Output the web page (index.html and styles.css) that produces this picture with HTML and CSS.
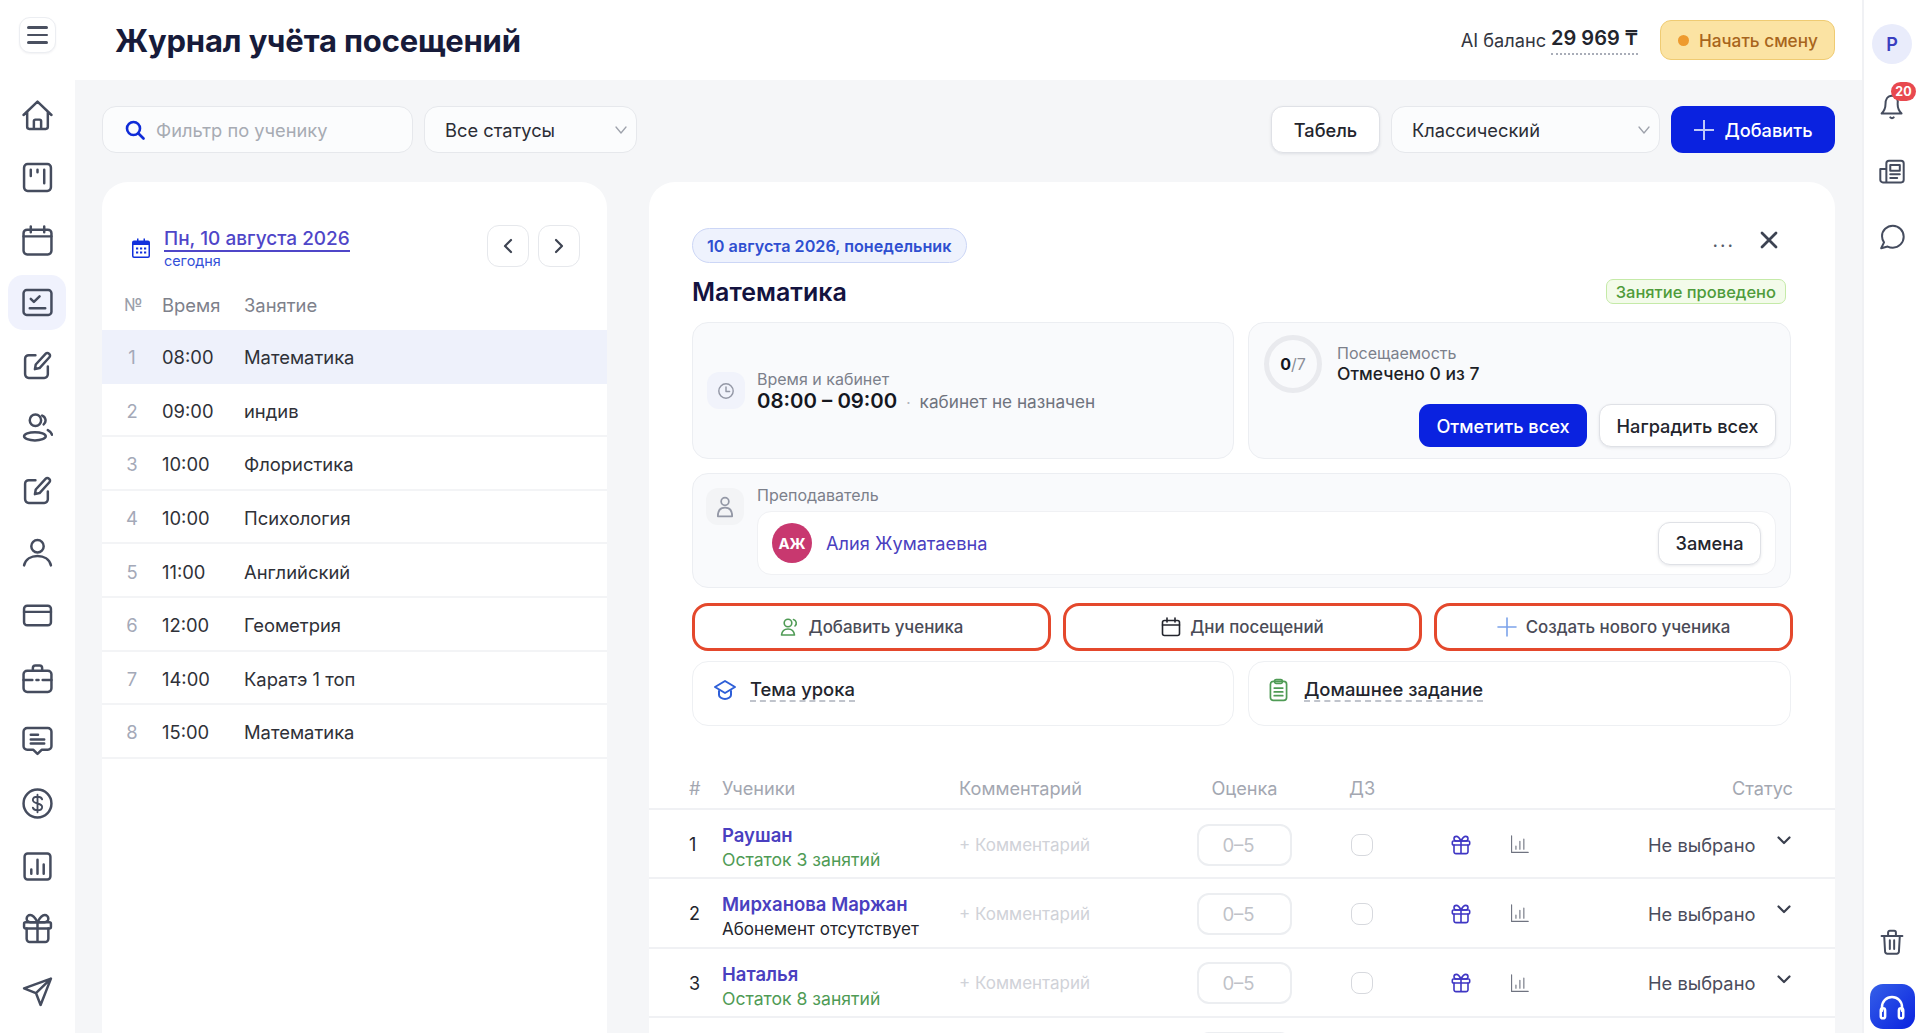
FILE: index.html
```html
<!DOCTYPE html>
<html lang="ru">
<head>
<meta charset="utf-8">
<title>Журнал учёта посещений</title>
<link rel="stylesheet" href="styles.css">
</head>
<body>
<svg class="defs" width="0" height="0" aria-hidden="true">
  <symbol id="i-home" viewBox="0 0 30 30"><path d="M1.500 14.500 15 1.500l13.500 13M5 11.500V26a2 2 0 0 0 2 2h16a2 2 0 0 0 2-2V11.500M11.500 28v-7.500a1.500 1.500 0 0 1 1.500-1.500h4a1.500 1.500 0 0 1 1.500 1.500V28"/></symbol>
  <symbol id="i-board" viewBox="0 0 30 30"><rect x="2" y="2" width="26" height="26" rx="3.500"/><path d="M8.500 7.500v6M15 7.500v2.500M21.500 7.500v13"/></symbol>
  <symbol id="i-calendar" viewBox="0 0 30 30"><rect x="1.500" y="4.500" width="27" height="24" rx="3.500"/><path d="M1.500 11h27M8.500 1.500V7M21.500 1.500V7"/></symbol>
  <symbol id="i-check" viewBox="0 0 30 30"><rect x="1.500" y="3" width="27" height="24" rx="3"/><path d="m8.500 11.500 3 3 5.500-5.500M7.500 20.500h15"/></symbol>
  <symbol id="i-edit" viewBox="0 0 30 30"><path d="M13 5H6.500a3.500 3.500 0 0 0-3.500 3.500v15A3.500 3.500 0 0 0 6.500 27h15a3.500 3.500 0 0 0 3.500-3.500V16"/><path d="M12.500 18.500l.8-4.500L23 3.500a2.100 2.100 0 0 1 3 0l.5.5a2.100 2.100 0 0 1 0 3L17 17.500z"/></symbol>
  <symbol id="i-users" viewBox="0 0 30 30"><circle cx="13" cy="8" r="5.500"/><ellipse cx="12.500" cy="23.500" rx="10.500" ry="4"/><path d="M19.500 3.500a5 5 0 0 1 1.500 8.500M25 17.500c2 1 3.500 2.500 4 4.500"/></symbol>
  <symbol id="i-user" viewBox="0 0 30 30"><circle cx="15" cy="8" r="6"/><path d="M2 26.500c1.500-6 7-9 13-9s11.500 3 13 9"/></symbol>
  <symbol id="i-card" viewBox="0 0 30 30"><rect x="2" y="5.500" width="26" height="19" rx="3"/><path d="M2 11.500h26"/></symbol>
  <symbol id="i-case" viewBox="0 0 30 30"><rect x="1.500" y="7.500" width="27" height="20.500" rx="3.500"/><path d="M10.500 7.500V5a2.500 2.500 0 0 1 2.500-2.500h4A2.500 2.500 0 0 1 19.500 5v2.500M1.500 16.500H10M14 16.500h2M20 16.500h8.500"/></symbol>
  <symbol id="i-msg" viewBox="0 0 30 30"><path d="M5 3h20a3.500 3.500 0 0 1 3.500 3.500v14A3.500 3.500 0 0 1 25 24h-6l-4 4-4-4H5a3.500 3.500 0 0 1-3.500-3.500v-14A3.500 3.500 0 0 1 5 3z"/><path d="M8.500 9.500h7M8.500 14h13M8.500 18h13"/></symbol>
  <symbol id="i-dollar" viewBox="0 0 30 30"><circle cx="15" cy="15" r="13.500"/><path d="M19.500 11c-.5-1.500-2.300-2.500-4.500-2.500-2.500 0-4.500 1.300-4.500 3.200 0 4.300 9 2.300 9 6.600 0 1.900-2 3.200-4.500 3.200-2.200 0-4-1-4.500-2.500M15 6.500v17" stroke-width="1.800"/></symbol>
  <symbol id="i-chart" viewBox="0 0 30 30"><rect x="2.500" y="2.500" width="25" height="25" rx="3"/><path d="M9 22v-4M15 22V8.500M21 22v-9"/></symbol>
  <symbol id="i-gift" viewBox="0 0 30 30"><rect x="2" y="9" width="26" height="6" rx="1.500"/><path d="M4.500 15v10a3 3 0 0 0 3 3h15a3 3 0 0 0 3-3V15M15 9v19M15 9c-2-4-4.500-7-7-7a3.500 3.500 0 0 0 0 7zM15 9c2-4 4.500-7 7-7a3.500 3.500 0 0 1 0 7z"/></symbol>
  <symbol id="i-send" viewBox="0 0 30 30"><path d="M28 2.500 2 12l11.500 4.500L18 28zM28 2.500 13.500 16.500"/></symbol>
  <symbol id="i-bell" viewBox="0 0 30 30"><path d="M15 2C9.500 2 7.500 7 7.500 11.500c0 5-1.500 8-4.500 11h23c-3-3-4.500-6-4.500-11C22.500 7 20.500 2 15 2zM13 27c1 1.200 3 1.200 4 0"/></symbol>
  <symbol id="i-news" viewBox="0 0 30 30"><path d="M8.500 27V5a3 3 0 0 1 3-3h14a3 3 0 0 1 3 3v19a3 3 0 0 1-3 3H4.500a3 3 0 0 1-3-3V11.500H8.500"/><rect x="13" y="7" width="11" height="6.500"/><path d="M13 17.500h11M13 22h8"/></symbol>
  <symbol id="i-chat" viewBox="0 0 30 30"><path d="M16 2C9 2 3.500 7.500 3.500 14c0 2.800 1 5.300 2.300 7.200L2.500 28l7.500-2c1.800.9 3.800 1.300 6 1.300 7 0 12.500-5.800 12.500-12.600S23 2 16 2z"/></symbol>
  <symbol id="i-trash" viewBox="0 0 30 30"><path d="M3 8h24M6 8l1 18a2.500 2.500 0 0 0 2.500 2.500h11A2.500 2.500 0 0 0 23 26L24 8M10.500 8V4A2 2 0 0 1 12.500 2h5a2 2 0 0 1 2 2V8M12.500 13v10M17.500 13v10"/></symbol>
  <symbol id="i-bar" viewBox="0 0 24 24"><path d="M2 1v21h21"/><path d="M7.500 18v-4M12.500 18V8M17.500 18V5"/></symbol>
</svg>

<aside class="sidebar">
  <div class="sidebar-top">
    <button class="burger" type="button"><span></span><span></span><span></span></button>
  </div>
  <nav class="nav">
    <a class="nav-item"><svg class="ico-nav"><use href="#i-home"/></svg></a>
    <a class="nav-item"><svg class="ico-nav"><use href="#i-board"/></svg></a>
    <a class="nav-item"><svg class="ico-nav"><use href="#i-calendar"/></svg></a>
    <a class="nav-item nav-active"><svg class="ico-nav"><use href="#i-check"/></svg></a>
    <a class="nav-item"><svg class="ico-nav"><use href="#i-edit"/></svg></a>
    <a class="nav-item"><svg class="ico-nav"><use href="#i-users"/></svg></a>
    <a class="nav-item"><svg class="ico-nav"><use href="#i-edit"/></svg></a>
    <a class="nav-item"><svg class="ico-nav"><use href="#i-user"/></svg></a>
    <a class="nav-item"><svg class="ico-nav"><use href="#i-card"/></svg></a>
    <a class="nav-item"><svg class="ico-nav"><use href="#i-case"/></svg></a>
    <a class="nav-item"><svg class="ico-nav"><use href="#i-msg"/></svg></a>
    <a class="nav-item"><svg class="ico-nav"><use href="#i-dollar"/></svg></a>
    <a class="nav-item"><svg class="ico-nav"><use href="#i-chart"/></svg></a>
    <a class="nav-item"><svg class="ico-nav"><use href="#i-gift"/></svg></a>
    <a class="nav-item"><svg class="ico-nav"><use href="#i-send"/></svg></a>
  </nav>
</aside>

<div class="main">
  <header class="topbar">
    <h1 class="page-title">Журнал учёта посещений</h1>
    <div class="balance"><span class="balance-label">AI баланс</span><span class="balance-value">29 969 ₸</span></div>
    <button class="shift-btn" type="button"><span class="shift-dot"></span>Начать смену</button>
  </header>

  <div class="content">
    <div class="toolbar">
      <label class="search">
        <svg class="ico-search" viewBox="0 0 20 20"><circle cx="8.500" cy="8.500" r="6.500"/><path d="m13.500 13.500 5 5"/></svg>
        <span class="placeholder">Фильтр по ученику</span>
      </label>
      <div class="select select-status"><span>Все статусы</span><svg class="ico-caret" viewBox="0 0 12 8"><path d="m1 1 5 6 5-6"/></svg></div>
      <div class="toolbar-gap"></div>
      <button class="btn btn-tabel" type="button">Табель</button>
      <div class="select select-view"><span>Классический</span><svg class="ico-caret" viewBox="0 0 12 8"><path d="m1 1 5 6 5-6"/></svg></div>
      <button class="btn-add" type="button"><svg class="ico-plus" viewBox="0 0 20 20"><path d="M10 0v20M0 10h20"/></svg>Добавить</button>
    </div>

    <div class="columns">
      <section class="panel lessons">
        <div class="lessons-head">
          <svg class="ico-date" viewBox="0 0 18 20"><path d="M2 2.500h3V.5h1.500v2h5v-2H13v2h3a2 2 0 0 1 2 2V18a2 2 0 0 1-2 2H2a2 2 0 0 1-2-2V4.500a2 2 0 0 1 2-2zM1.500 7v11c0 .3.2.5.5.5h14c.3 0 .5-.2.5-.5V7z"/><path d="M4 9.500h2.200v2H4zM8 9.500h2.200v2H8zM12 9.500h2.200v2H12zM4 13.500h2.200v2H4zM8 13.500h2.200v2H8zM12 13.500h2.200v2H12z"/></svg>
          <div class="date-block">
            <a class="date-link">Пн, 10 августа 2026</a>
            <div class="date-sub">сегодня</div>
          </div>
          <button class="arrow-btn" type="button"><svg class="ico-arrow" viewBox="0 0 10 16"><path d="M8 2 2 8l6 6"/></svg></button>
          <button class="arrow-btn" type="button"><svg class="ico-arrow" viewBox="0 0 10 16"><path d="m2 2 6 6-6 6"/></svg></button>
        </div>
        <div class="lesson-row lesson-header"><span class="l-num">№</span><span>Время</span><span>Занятие</span></div>
        <div class="lesson-row lesson-item lesson-active"><span class="l-num">1</span><span>08:00</span><span>Математика</span></div>
        <div class="lesson-row lesson-item"><span class="l-num">2</span><span>09:00</span><span>индив</span></div>
        <div class="lesson-row lesson-item"><span class="l-num">3</span><span>10:00</span><span>Флористика</span></div>
        <div class="lesson-row lesson-item"><span class="l-num">4</span><span>10:00</span><span>Психология</span></div>
        <div class="lesson-row lesson-item"><span class="l-num">5</span><span>11:00</span><span>Английский</span></div>
        <div class="lesson-row lesson-item"><span class="l-num">6</span><span>12:00</span><span>Геометрия</span></div>
        <div class="lesson-row lesson-item"><span class="l-num">7</span><span>14:00</span><span>Каратэ 1 топ</span></div>
        <div class="lesson-row lesson-item"><span class="l-num">8</span><span>15:00</span><span>Математика</span></div>
      </section>

      <section class="panel detail">
        <div class="detail-body">
          <div class="detail-top">
            <span class="date-pill">10 августа 2026, понедельник</span>
            <div class="detail-actions">
              <span class="dots">...</span>
              <svg class="ico-close" viewBox="0 0 18 18"><path d="m2 2 14 14M16 2 2 16"/></svg>
            </div>
          </div>
          <div class="title-row">
            <h2 class="lesson-title">Математика</h2>
            <span class="done-badge">Занятие проведено</span>
          </div>

          <div class="info-grid">
            <div class="info-card time-card">
              <span class="tile"><svg class="ico-tile" viewBox="0 0 20 20"><circle cx="10" cy="10" r="8"/><path d="M10 5.500V10.500h4"/></svg></span>
              <div class="time-text">
                <div class="info-label">Время и кабинет</div>
                <div class="time-line"><span class="time-value">08:00 – 09:00</span><span class="time-sep">·</span><span class="time-room">кабинет не назначен</span></div>
              </div>
            </div>
            <div class="info-card attend-card">
              <div class="attend-top">
                <div class="ring"><b>0</b><span>/7</span></div>
                <div>
                  <div class="info-label">Посещаемость</div>
                  <div class="attend-value">Отмечено 0 из 7</div>
                </div>
              </div>
              <div class="attend-actions">
                <button class="btn-primary" type="button">Отметить всех</button>
                <button class="btn btn-award" type="button">Наградить всех</button>
              </div>
            </div>
          </div>

          <div class="info-card teacher-card">
            <span class="tile tile-gray"><svg class="ico-tile ico-tile-lg" viewBox="0 0 20 20"><circle cx="10" cy="5" r="3.500"/><path d="M3.500 18.500c0-5 2.500-8 6.500-8s6.500 3 6.500 8z"/></svg></span>
            <div class="teacher-main">
              <div class="info-label">Преподаватель</div>
              <div class="teacher-box">
                <span class="avatar">АЖ</span>
                <a class="teacher-name">Алия Жуматаевна</a>
                <button class="btn btn-swap" type="button">Замена</button>
              </div>
            </div>
          </div>

          <div class="action-grid">
            <button class="action" type="button"><svg class="ico-act ico-green" viewBox="0 0 20 20"><circle cx="8" cy="6" r="3.800"/><path d="M1.500 18c.5-4 3-6 6.500-6s6 2 6.500 6zM13.500 2.500a3.800 3.800 0 0 1 1.500 6.500"/></svg>Добавить ученика</button>
            <button class="action" type="button"><svg class="ico-act ico-dark" viewBox="0 0 20 20"><rect x="1.500" y="3.500" width="17" height="15" rx="2"/><path d="M1.500 8h17M6 1v4M14 1v4"/></svg>Дни посещений</button>
            <button class="action" type="button"><svg class="ico-act ico-blue" viewBox="0 0 20 20"><path d="M10 1v18M1 10h18"/></svg>Создать нового ученика</button>
          </div>

          <div class="info-grid note-grid">
            <div class="note-card">
              <svg class="ico-note ico-cap" viewBox="0 0 24 24"><path d="M12 3 2 9l10 6 10-6z"/><path d="M6 13v4c0 2 3 4 6 4s6-2 6-4v-4"/></svg>
              <span class="note-text">Тема урока</span>
            </div>
            <div class="note-card note-hw">
              <svg class="ico-note ico-clip" viewBox="0 0 20 24"><rect x="1.500" y="3" width="17" height="20" rx="3"/><rect x="6" y="1" width="8" height="4" rx="1.500"/><path d="M5.500 10h9M5.500 14h9M5.500 18h9"/></svg>
              <span class="note-text">Домашнее задание</span>
            </div>
          </div>
        </div>

        <div class="st-head st-grid">
          <span class="st-hash">#</span><span>Ученики</span><span>Комментарий</span><span class="st-score">Оценка</span><span>ДЗ</span><span></span><span></span><span class="st-status">Статус</span>
        </div>

        <div class="st-row st-grid">
          <span class="st-index">1</span>
          <div class="st-who"><a class="st-name">Раушан</a><div class="st-sub st-ok">Остаток 3 занятий</div></div>
          <span class="st-comment">+ Комментарий</span>
          <span class="score-box">0–5</span>
          <span class="checkbox"></span>
          <svg class="ico-gift"><use href="#i-gift"/></svg>
          <svg class="ico-bar"><use href="#i-bar"/></svg>
          <div class="st-state"><span>Не выбрано</span><svg class="ico-chev" viewBox="0 0 14 9"><path d="m1.500 1.500 5.500 5.500 5.500-5.500"/></svg></div>
        </div>
        <div class="st-row st-grid">
          <span class="st-index">2</span>
          <div class="st-who"><a class="st-name">Мирханова Маржан</a><div class="st-sub">Абонемент отсутствует</div></div>
          <span class="st-comment">+ Комментарий</span>
          <span class="score-box">0–5</span>
          <span class="checkbox"></span>
          <svg class="ico-gift"><use href="#i-gift"/></svg>
          <svg class="ico-bar"><use href="#i-bar"/></svg>
          <div class="st-state"><span>Не выбрано</span><svg class="ico-chev" viewBox="0 0 14 9"><path d="m1.500 1.500 5.500 5.500 5.500-5.500"/></svg></div>
        </div>
        <div class="st-row st-grid">
          <span class="st-index">3</span>
          <div class="st-who"><a class="st-name">Наталья</a><div class="st-sub st-ok">Остаток 8 занятий</div></div>
          <span class="st-comment">+ Комментарий</span>
          <span class="score-box">0–5</span>
          <span class="checkbox"></span>
          <svg class="ico-gift"><use href="#i-gift"/></svg>
          <svg class="ico-bar"><use href="#i-bar"/></svg>
          <div class="st-state"><span>Не выбрано</span><svg class="ico-chev" viewBox="0 0 14 9"><path d="m1.500 1.500 5.500 5.500 5.500-5.500"/></svg></div>
        </div>
        <div class="st-row st-grid">
          <span class="st-index"></span><div class="st-who"></div><span></span>
          <span class="score-box"></span>
        </div>
      </section>
    </div>
  </div>
</div>

<aside class="rail">
  <div class="rail-top">
    <span class="rail-avatar">Р</span>
    <span class="rail-bell"><svg class="ico-rail"><use href="#i-bell"/></svg><span class="bell-badge">20</span></span>
    <svg class="ico-rail"><use href="#i-news"/></svg>
    <svg class="ico-rail"><use href="#i-chat"/></svg>
  </div>
  <div class="rail-bottom">
    <svg class="ico-rail"><use href="#i-trash"/></svg>
    <button class="support" type="button"><svg class="ico-head" viewBox="0 0 24 24"><path d="M4 15v-3a8 8 0 0 1 16 0v3"/><rect x="3" y="13" width="3.500" height="8" rx="1.700"/><rect x="17.500" y="13" width="3.500" height="8" rx="1.700"/></svg></button>
  </div>
</aside>
</body>
</html>
```
FILE: styles.css
```css
* { box-sizing: border-box; }
html, body { height: 100%; }
body {
  margin: 0;
  display: flex;
  height: 1033px;
  overflow: hidden;
  background: #fff;
  font-family: Inter, "Noto Sans", sans-serif;
  color: #23252d;
}
button { font-family: inherit; cursor: pointer; }
a { cursor: pointer; }
h1, h2 { margin: 0; }
.defs { position: absolute; }
svg { fill: none; stroke-linecap: round; stroke-linejoin: round; display: block; flex: none; }

/* Left navigation */
.sidebar { width: 75px; flex: none; background: #fff; }
.sidebar-top { height: 87.5px; padding: 17px 0 0 19px; }
.burger {
  width: 37px; height: 36px; padding: 0 7px;
  display: flex; flex-direction: column; justify-content: center; gap: 5px;
  background: #fff; border: 1px solid #eceef2; border-radius: 11px;
  box-shadow: 0 1px 2px rgba(30, 40, 70, .06);
}
.burger span { display: block; height: 2.5px; background: #4a5060; border-radius: 2px; }
.nav { display: flex; flex-direction: column; gap: 7.6px; padding-left: 8px; }
.nav-item { width: 58px; height: 55px; display: flex; align-items: center; justify-content: center; border-radius: 15px; }
.nav-active { background: #f0f2fd; }
.ico-nav { width: 31px; height: 31px; stroke: #454c5e; stroke-width: 2.4; }

/* Main */
.main { flex: 1; min-width: 0; display: flex; flex-direction: column; }
.topbar { height: 80px; flex: none; display: flex; align-items: center; padding: 0 27px 0 40px; }
.page-title { font-size: 31px; font-weight: 700; letter-spacing: -.15px; color: #171b3a; flex: 1; }
.balance { display: flex; align-items: center; gap: 5px; margin-right: 22px; }
.balance-label { font-size: 18.2px; color: #33363f; }
.balance-value { font-size: 20px; font-weight: 600; color: #23252d; padding-bottom: 3px; border-bottom: 2px dotted #a9adb8; }
.shift-btn {
  width: 175px; height: 40px; display: flex; align-items: center; gap: 10px; padding: 0 0 0 17px;
  background: #fbe3a3; border: 1px solid #efcb72; border-radius: 11px;
  font-size: 17.2px; font-weight: 500; color: #a8651c;
}
.shift-dot { width: 11px; height: 11px; border-radius: 50%; background: #ee9a2e; }

.content { flex: 1; min-height: 0; background: #f5f6f8; padding: 26px 27px 0; display: flex; flex-direction: column; overflow: hidden; }
.toolbar { display: flex; align-items: stretch; height: 47px; gap: 11px; flex: none; }
.toolbar-gap { flex: 1; }
.search {
  width: 311px; display: flex; align-items: center; gap: 11px; padding-left: 22px;
  background: #fbfcfd; border: 1px solid #e6e8ec; border-radius: 14px;
}
.ico-search { width: 20px; height: 20px; stroke: #0f2bd8; stroke-width: 2.6; }
.placeholder { font-size: 18.3px; color: #a7abb3; }
.select {
  display: flex; align-items: center; justify-content: space-between; padding: 0 9px 0 20px;
  background: #fbfcfd; border: 1px solid #e6e8ec; border-radius: 14px;
  font-size: 18.3px; color: #2b2d35;
}
.select-status { width: 213px; }
.select-view { width: 269px; }
.ico-caret { width: 12px; height: 8px; stroke: #9ea2ac; stroke-width: 1.3; }
.btn {
  background: #fff; border: 1px solid #dfe1e6; border-radius: 12px;
  box-shadow: 0 1px 3px rgba(30, 40, 70, .1);
  font-size: 18.2px; font-weight: 500; color: #23252d;
}
.btn-tabel { width: 109px; }
.btn-add {
  width: 164px; display: flex; align-items: center; justify-content: center; gap: 11px;
  background: #0a22e0; border: 0; border-radius: 12px; color: #fff; font-size: 18.2px; font-weight: 500;
}
.ico-plus { width: 20px; height: 20px; stroke: #bfc8f8; stroke-width: 2; }

.columns { flex: 1; min-height: 0; display: flex; gap: 42px; margin-top: 29px; }
.panel { background: #fff; border-radius: 26px 26px 0 0; }

/* Lessons list */
.lessons { width: 505px; flex: none; }
.lessons-head { display: flex; align-items: center; height: 85px; padding: 43px 27px 0 30px; }
.ico-date { width: 18px; height: 20px; fill: #1130dc; stroke: none; margin: 4px 14px 0 0; }
.date-block { flex: 1; margin-top: 5px; }
.date-link { font-size: 19px; font-weight: 500; color: #4f46c8; line-height: 22px; border-bottom: 2px solid #4f46c8; display: inline-block; }
.date-sub { font-size: 14.4px; line-height: 18px; color: #3350d8; }
.arrow-btn {
  width: 42px; height: 42px; margin-left: 9px; display: flex; align-items: center; justify-content: center;
  background: #fff; border: 1px solid #e6e8ec; border-radius: 12px; padding: 0;
}
.ico-arrow { width: 10px; height: 16px; stroke: #3e4452; stroke-width: 2.2; }
.lesson-row { display: grid; grid-template-columns: 60px 82px 1fr; align-items: center; font-size: 18.4px; }
.lesson-header { height: 63px; padding-top: 12px; color: #7e818b; }
.lesson-item { height: 53.6px; padding-top: 3px; border-bottom: 2px solid #f3f4f6; color: #2f3138; }
.lesson-header .l-num { padding-left: 22px; }
.l-num { text-align: center; color: #a4a9b8; }
.lesson-header .l-num { color: #9ba0ab; text-align: left; font-size: 17px; }
.lesson-active { background: #eef1fb; border-bottom-color: #eef1fb; }

/* Detail */
.detail { flex: 1; min-width: 0; padding-top: 46px; }
.detail-body { padding: 0 44px 0 43px; }
.detail-top { display: flex; justify-content: space-between; align-items: center; height: 35px; }
.date-pill {
  height: 35px; display: flex; align-items: center; padding: 0 14px;
  background: #eef2fd; border: 1px solid #ccd6f6; border-radius: 18px;
  font-size: 16.2px; font-weight: 600; color: #2f4fd0;
}
.detail-actions { display: flex; align-items: center; gap: 25px; padding-right: 13px; margin-top: -11px; }
.dots { font-size: 19px; color: #555b6a; line-height: 20px; letter-spacing: 2px; margin-top: 2px; }
.ico-close { width: 18px; height: 18px; stroke: #3d4352; stroke-width: 2.8; }
.title-row { display: flex; justify-content: space-between; align-items: center; height: 59px; padding: 0 5px 2px 0; }
.lesson-title { font-size: 25px; font-weight: 600; color: #13133f; }
.done-badge {
  height: 25px; display: flex; align-items: center; padding: 0 9px;
  background: #f3fbea; border: 1px solid #c5eaa8; border-radius: 7px;
  font-size: 16.5px; font-weight: 500; color: #4f9b3a;
}
.info-grid { display: grid; grid-template-columns: 542px 1fr; gap: 14px; }
.info-card { background: #f9fafc; border: 1px solid #eceef2; border-radius: 16px; }
.time-card { height: 137px; display: flex; align-items: center; gap: 12px; padding: 0 14px; }
.time-text { padding-top: 2px; }
.tile { width: 38px; height: 37px; flex: none; display: flex; align-items: center; justify-content: center; background: #f1f3fb; border-radius: 12px; }
.tile-gray { background: #f3f4f6; }
.ico-tile { width: 18px; height: 18px; stroke: #9498a6; stroke-width: 1.6; }
.ico-tile-lg { width: 22px; height: 22px; }
.info-label { font-size: 16px; line-height: 20px; color: #7c808b; }
.time-line { display: flex; align-items: baseline; line-height: 24px; }
.time-value { font-size: 20.4px; font-weight: 600; color: #15171f; }
.time-sep { margin: 0 9px; color: #b0b3bb; font-size: 15px; }
.time-room { font-size: 17.2px; color: #6f737e; }
.attend-card { padding: 12px 14px 0 15px; }
.attend-top { display: flex; align-items: center; gap: 15px; }
.ring {
  width: 58px; height: 58px; border: 5px solid #e9eaee; border-radius: 50%;
  display: flex; align-items: center; justify-content: center; font-size: 16px; color: #8b8e97;
}
.ring b { color: #15171f; font-weight: 700; }
.attend-value { font-size: 17.5px; font-weight: 500; line-height: 22px; color: #1d1f27; }
.attend-actions { display: flex; justify-content: flex-end; gap: 12px; margin-top: 11px; }
.btn-primary { width: 168px; height: 43px; background: #0a22e0; border: 0; border-radius: 11px; color: #fff; font-size: 18.2px; font-weight: 500; }
.btn-award { width: 177px; height: 43px; }
.teacher-card { height: 115px; margin-top: 14px; display: flex; gap: 13px; padding: 14px 14px 0 13px; }
.teacher-main { flex: 1; min-width: 0; margin-top: -3px; }
.teacher-box {
  height: 64px; margin-top: 6px; display: flex; align-items: center; padding: 0 14px;
  background: #fff; border: 1px solid #f0f1f4; border-radius: 14px;
}
.avatar { width: 40px; height: 40px; border-radius: 50%; background: #c8386f; color: #fff; display: flex; align-items: center; justify-content: center; font-size: 15px; font-weight: 700; flex: none; }
.teacher-name { margin-left: 14px; flex: 1; font-size: 18.2px; font-weight: 400; color: #4a3fc0; }
.btn-swap { width: 103px; height: 43px; }
.action-grid { display: grid; grid-template-columns: repeat(3, 1fr); gap: 12px; margin: 15px -2px 0 0; }
.action {
  height: 48px; display: flex; align-items: center; justify-content: center; gap: 9px;
  background: #fff; border: 3px solid #e4482c; border-radius: 16px;
  font-size: 16.9px; font-weight: 500; color: #4a4b57;
}
.ico-act { width: 20px; height: 20px; stroke-width: 1.6; }
.ico-green { stroke: #4f9b55; }
.ico-dark { stroke: #23252d; }
.ico-blue { stroke: #7ca3ea; }
.note-grid { margin-top: 10px; }
.note-card {
  height: 65px; display: flex; align-items: center; gap: 13px; padding: 0 0 8px 20px;
  background: #fff; border: 1px solid #eef0f3; border-radius: 16px;
}
.note-hw { gap: 16px; }
.note-text { font-size: 18.4px; font-weight: 500; color: #23252d; border-bottom: 2px dashed #c0c4cc; line-height: 22px; }
.ico-note { width: 24px; height: 24px; stroke-width: 2; }
.ico-cap { stroke: #2e5fd8; }
.ico-clip { width: 19px; stroke: #4f9b55; stroke-width: 1.8; }

/* Students table */
.st-grid { display: grid; grid-template-columns: 33px 237px 238px 152px 100px 60px 139px 1fr; align-items: center; padding: 0 42px 0 40px; }
.st-head { height: 42px; margin-top: 42px; border-bottom: 2px solid #f0f1f4; font-size: 18.2px; color: #a3a7b1; }
.st-hash { color: #a3a7b1; }
.st-score { width: 95px; text-align: center; }
.st-status { text-align: right; }
.st-row { height: 69.3px; padding-top: 2px; border-bottom: 2px solid #f0f1f4; }
.st-index { font-size: 18px; color: #23252d; }
.st-who { padding-top: 6px; }
.st-name { display: block; font-size: 18.5px; font-weight: 600; line-height: 25px; color: #4a3fc0; }
.st-sub { font-size: 17px; line-height: 24px; color: #23252d; }
.st-ok { font-size: 17.6px; color: #4f9b55; }
.st-comment { font-size: 17px; color: #d0d2d8; }
.score-box {
  width: 95px; height: 42px; display: flex; align-items: center; justify-content: center; padding-right: 12px;
  border: 2px solid #eceef1; border-radius: 12px; font-size: 18.5px; color: #bfc2c8;
}
.checkbox { width: 22px; height: 22px; margin-left: 2px; border: 1.5px solid #d7d9de; border-radius: 8px; }
.ico-gift { width: 20px; height: 20px; stroke: #3f36c4; stroke-width: 2.4; margin-left: 2px; }
.ico-bar { width: 19px; height: 19px; stroke: #6f7380; stroke-width: 1.4; margin-left: 1px; }
.st-state { display: flex; align-items: center; justify-content: space-between; font-size: 18.3px; color: #4a4c5c; }
.ico-chev { width: 14px; height: 9px; stroke: #3a3f4e; stroke-width: 2.2; margin: -8px 2px 0 0; }

/* Right rail */
.rail { width: 58px; flex: none; border-left: 2px solid #f0f1f4; display: flex; flex-direction: column; justify-content: space-between; align-items: center; padding: 24px 0 4px; }
.rail-top { display: flex; flex-direction: column; align-items: center; gap: 39px; }
.rail-avatar { width: 40px; height: 40px; border-radius: 50%; background: #e9ecfb; color: #3a3fc0; font-size: 18px; font-weight: 600; display: flex; align-items: center; justify-content: center; margin-bottom: -9px; }
.rail-bell { position: relative; display: block; }
.bell-badge { position: absolute; top: -12px; left: 12px; width: 25px; height: 19px; border-radius: 10px; background: #e8494f; color: #fff; font-size: 12.5px; font-weight: 700; display: flex; align-items: center; justify-content: center; }
.ico-rail { width: 26px; height: 26px; stroke: #454c5e; stroke-width: 2.3; }
.rail-bottom { display: flex; flex-direction: column; align-items: center; gap: 29px; }
.support { width: 45px; height: 45px; padding: 0; display: flex; align-items: center; justify-content: center; border: 0; border-radius: 13px; background: linear-gradient(135deg, #3560e8, #0a22e0); }
.ico-head { width: 30px; height: 30px; stroke: #fff; stroke-width: 2; }
```
